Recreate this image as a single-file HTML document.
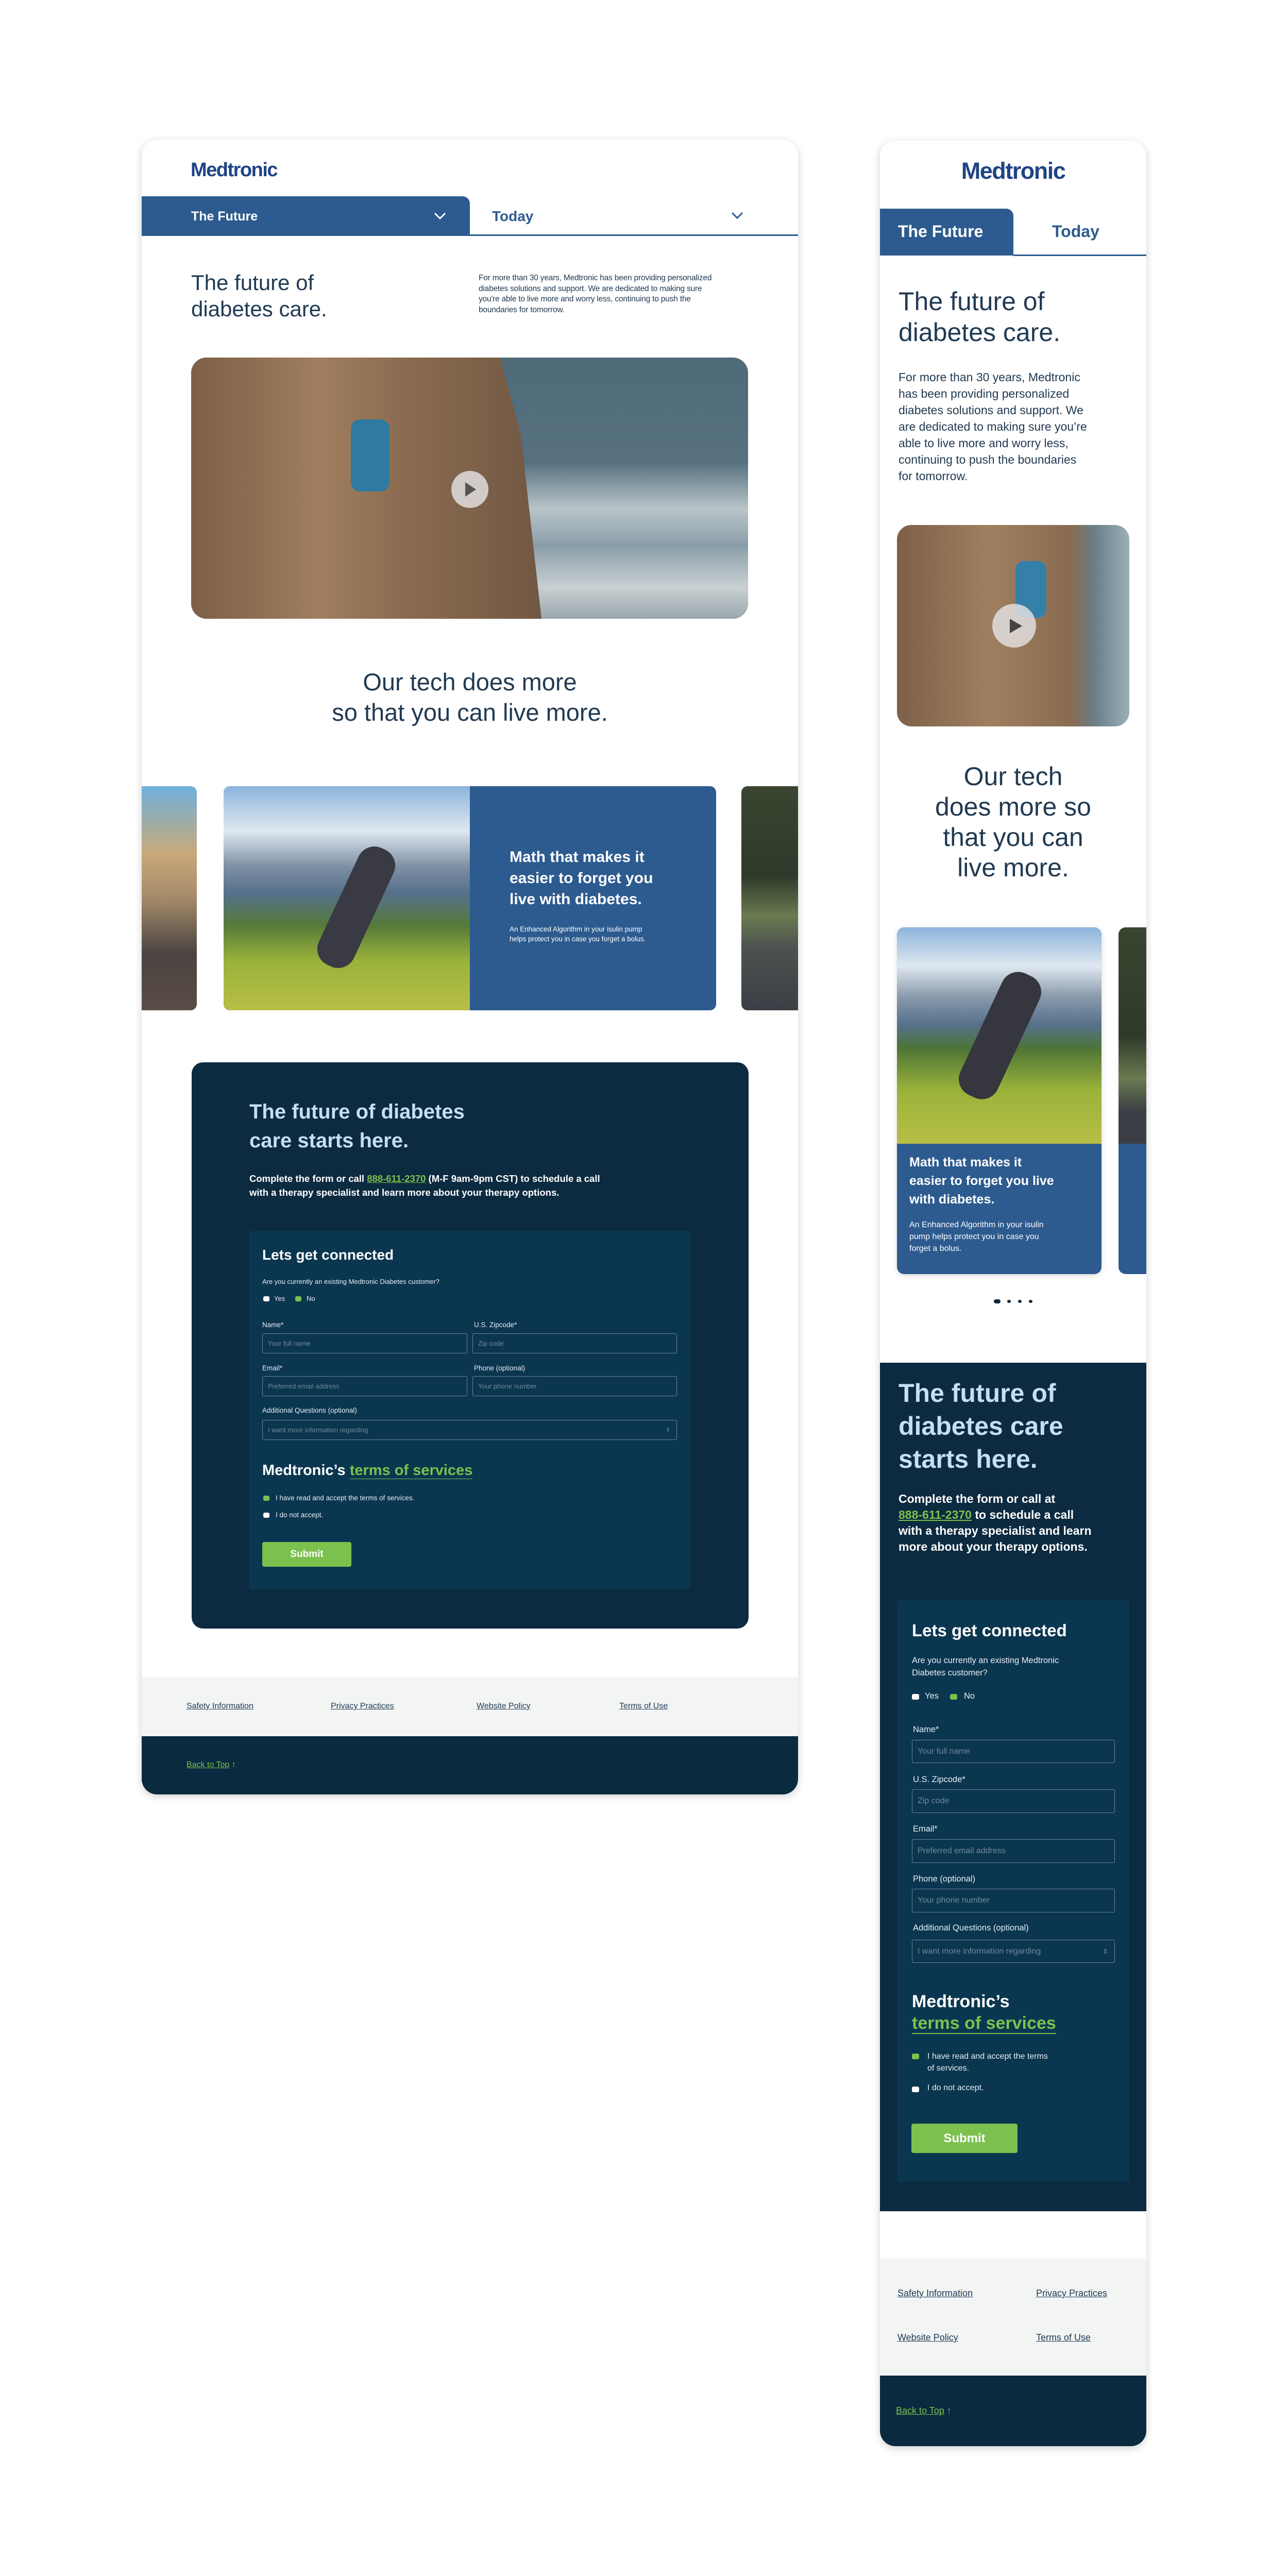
<!DOCTYPE html>
<html><head><meta charset="utf-8"><style>
*{margin:0;padding:0;box-sizing:border-box}
html,body{width:2500px;height:5021px;overflow:hidden}
body{background:#fff;position:relative;font-family:"Liberation Sans",sans-serif}
.a{position:absolute;white-space:nowrap}
.frame{position:absolute;background:#fff;border-radius:30px;box-shadow:0 4px 16px rgba(0,0,0,.18);overflow:hidden}
.logo{color:#1f4485;font-weight:bold;letter-spacing:-1.5px}
.navy{color:#213a52}
.inp{position:absolute;border:1.5px solid #6f8396;border-radius:3px;color:#6f8899;padding-left:10px;display:flex;align-items:center;white-space:nowrap}
.lbl{position:absolute;color:#e6eef4;white-space:nowrap}
.cb{position:absolute;background:#fff;border-radius:3px}
.cbg{position:absolute;background:#7cc04e;border-radius:3px}
.u{text-decoration:underline}
</style></head><body>

<!-- DESKTOP FRAME -->
<div class="frame" style="left:275px;top:271px;width:1274px;height:3212px"></div>
<div class="a logo" style="left:370px;top:309px;font-size:38px">Medtronic</div>
<div class="a" style="left:275px;top:381px;width:637px;height:77px;background:#2d5b8f;border-top-right-radius:14px"></div>
<div class="a" style="left:371px;top:406px;font-size:25px;font-weight:bold;color:#fff">The Future</div>
<svg class="a" style="left:842px;top:412px" width="24" height="16" viewBox="0 0 24 16"><path d="M2 2 L12 12 L22 2" fill="none" stroke="#fff" stroke-width="3"/></svg>
<div class="a" style="left:955px;top:404px;font-size:28px;font-weight:bold;color:#2d5b8f">Today</div>
<svg class="a" style="left:1419px;top:411px" width="24" height="16" viewBox="0 0 24 16"><path d="M2 2 L12 12 L22 2" fill="none" stroke="#2d5b8f" stroke-width="3"/></svg>
<div class="a" style="left:912px;top:455px;width:637px;height:3px;background:#2d5b8f"></div>

<div class="a navy" style="left:371px;top:523px;font-size:42px;line-height:51px">The future of<br>diabetes care.</div>
<div class="a navy" style="left:929px;top:530px;font-size:15.5px;line-height:20.5px;letter-spacing:-.2px">For more than 30 years, Medtronic has been providing personalized<br>diabetes solutions and support. We are dedicated to making sure<br>you're able to live more and worry less, continuing to push the<br>boundaries for tomorrow.</div>

<div class="a" style="left:371px;top:694px;width:1081px;height:507px;border-radius:30px;overflow:hidden;background:#587080">
 <div class="a" style="left:600px;top:0;width:481px;height:507px;background:linear-gradient(180deg,#4f6b7a 0%,#56707e 40%,#b8c4c8 58%,#8a9ea8 72%,#c9d0d2 88%,#9aa7ad 100%)"></div>
 <div class="a" style="left:0;top:0;width:700px;height:507px;background:linear-gradient(90deg,#7d5f47,#a07e5f 35%,#8a6b50 60%,#6f5642 100%);clip-path:polygon(0 0,600px 0,640px 150px,680px 507px,0 507px)"></div>
 <div class="a" style="left:310px;top:120px;width:75px;height:140px;background:#2f7aa0;border-radius:18px"></div>
 <div class="a" style="left:505px;top:220px;width:72px;height:72px;border-radius:50%;background:rgba(225,222,222,.85)"></div>
 <svg class="a" style="left:530px;top:240px" width="26" height="32" viewBox="0 0 26 32"><path d="M2 2 L23 16 L2 30 Z" fill="#555"/></svg>
</div>

<div class="a navy" style="left:275px;top:1294px;width:1274px;text-align:center;font-size:47px;line-height:59px">Our tech does more<br>so that you can live more.</div>

<!-- cards desktop -->
<div class="a" style="left:275px;top:1526px;width:107px;height:435px;border-radius:0 12px 12px 0;background:linear-gradient(180deg,#6fb0dc 0%,#c9a97a 30%,#a48a6a 50%,#4a4440 75%,#5a4c48 100%)"></div>
<div class="a" style="left:434px;top:1526px;width:956px;height:435px;border-radius:12px;overflow:hidden;background:#2d5b8f">
 <div class="a" style="left:0;top:0;width:478px;height:435px;background:linear-gradient(180deg,#8cb4dc 0%,#dfe8f0 20%,#7d8fa4 36%,#55708a 48%,#557a3a 62%,#9ab23a 78%,#b7bf46 100%)"></div>
 <div class="a" style="left:220px;top:110px;width:75px;height:250px;background:#3a3a44;border-radius:34px;transform:rotate(25deg)"></div>
 <div class="a" style="left:555px;top:117px;font-size:30px;line-height:41px;font-weight:bold;color:#fff">Math that makes it<br>easier to forget you<br>live with diabetes.</div>
 <div class="a" style="left:555px;top:268px;font-size:13.5px;line-height:19px;color:#fff">An Enhanced Algorithm in your isulin pump<br>helps protect you in case you forget a bolus.</div>
</div>
<div class="a" style="left:1439px;top:1526px;width:110px;height:435px;border-radius:12px 0 0 12px;background:linear-gradient(180deg,#3a4530 0%,#2e3a2a 40%,#6a7a50 58%,#4d5250 72%,#3b3f45 100%)"></div>

<!-- desktop dark box -->
<div class="a" style="left:372px;top:2062px;width:1081px;height:1099px;background:#0c2a40;border-radius:22px"></div>
<div class="a" style="left:484px;top:2130px;font-size:40px;line-height:56px;font-weight:bold;color:#c6def1">The future of diabetes<br>care starts here.</div>
<div class="a" style="left:484px;top:2274px;font-size:18.5px;line-height:27px;font-weight:bold;color:#fff">Complete the form or call <span class="u" style="color:#7cc04e">888-611-2370</span> (M-F 9am-9pm CST) to schedule a call<br>with a therapy specialist and learn more about your therapy options.</div>
<div class="a" style="left:484px;top:2389px;width:856px;height:696px;background:#0b3650;border-radius:6px"></div>
<div class="a" style="left:509px;top:2420px;font-size:28px;font-weight:bold;color:#fff">Lets get connected</div>
<div class="lbl" style="left:509px;top:2480px;font-size:13px">Are you currently an existing Medtronic Diabetes customer?</div>
<div class="cb" style="left:511px;top:2516px;width:12px;height:10px"></div>
<div class="lbl" style="left:532px;top:2513px;font-size:13px">Yes</div>
<div class="cbg" style="left:573px;top:2516px;width:12px;height:10px"></div>
<div class="lbl" style="left:595px;top:2513px;font-size:13px">No</div>
<div class="lbl" style="left:509px;top:2564px;font-size:13.5px">Name*</div>
<div class="lbl" style="left:920px;top:2564px;font-size:13.5px">U.S. Zipcode*</div>
<div class="inp" style="left:509px;top:2588px;width:398px;height:39px;font-size:13px">Your full name</div>
<div class="inp" style="left:917px;top:2588px;width:397px;height:39px;font-size:13px">Zip code</div>
<div class="lbl" style="left:509px;top:2648px;font-size:13.5px">Email*</div>
<div class="lbl" style="left:920px;top:2648px;font-size:13.5px">Phone (optional)</div>
<div class="inp" style="left:509px;top:2671px;width:398px;height:39px;font-size:13px">Preferred email address</div>
<div class="inp" style="left:917px;top:2671px;width:397px;height:39px;font-size:13px">Your phone number</div>
<div class="lbl" style="left:509px;top:2730px;font-size:13.5px">Additional Questions (optional)</div>
<div class="inp" style="left:509px;top:2756px;width:805px;height:39px;font-size:13px">I want more information regarding<span style="position:absolute;right:12px;font-size:11px">⇕</span></div>
<div class="a" style="left:509px;top:2838px;font-size:29px;font-weight:bold;color:#fff">Medtronic’s <span style="color:#7cc04e;border-bottom:1.5px solid #7cc04e">terms of services</span></div>
<div class="cbg" style="left:511px;top:2903px;width:12px;height:10px"></div>
<div class="lbl" style="left:535px;top:2900px;font-size:13.5px">I have read and accept the terms of services.</div>
<div class="cb" style="left:511px;top:2936px;width:12px;height:10px"></div>
<div class="lbl" style="left:535px;top:2933px;font-size:13.5px">I do not accept.</div>
<div class="a" style="left:509px;top:2993px;width:173px;height:48px;background:#7cc04e;border-radius:4px;color:#fff;font-weight:bold;font-size:19px;text-align:center;line-height:48px">Submit</div>

<!-- desktop footer -->
<div class="a" style="left:275px;top:3255px;width:1274px;height:115px;background:#f3f5f5"></div>
<div class="a" style="left:275px;top:3370px;width:1274px;height:113px;background:#0a2a40;border-radius:0 0 30px 30px"></div>
<div class="a u navy" style="left:362px;top:3303px;font-size:16px">Safety Information</div>
<div class="a u navy" style="left:642px;top:3303px;font-size:16px">Privacy Practices</div>
<div class="a u navy" style="left:925px;top:3303px;font-size:16px">Website Policy</div>
<div class="a u navy" style="left:1202px;top:3303px;font-size:16px">Terms of Use</div>
<div class="a" style="left:362px;top:3417px;font-size:16px;color:#7cc04e"><span class="u">Back to Top</span> ↑</div>

<!-- MOBILE FRAME -->
<div class="frame" style="left:1708px;top:273px;width:517px;height:4475px"></div>
<div class="a logo" style="left:1708px;top:306px;width:517px;text-align:center;font-size:45px">Medtronic</div>
<div class="a" style="left:1708px;top:405px;width:259px;height:91px;background:#2d5b8f;border-top-right-radius:14px"></div>
<div class="a" style="left:1743px;top:431px;font-size:32px;font-weight:bold;color:#fff">The Future</div>
<div class="a" style="left:2042px;top:431px;font-size:32px;font-weight:bold;color:#2d5b8f">Today</div>
<div class="a" style="left:1967px;top:494px;width:258px;height:3px;background:#2d5b8f"></div>
<div class="a navy" style="left:1744px;top:555px;font-size:50px;line-height:60px">The future of<br>diabetes care.</div>
<div class="a navy" style="left:1744px;top:716px;font-size:23px;line-height:32px">For more than 30 years, Medtronic<br>has been providing personalized<br>diabetes solutions and support. We<br>are dedicated to making sure you’re<br>able to live more and worry less,<br>continuing to push the boundaries<br>for tomorrow.</div>
<div class="a" style="left:1741px;top:1019px;width:451px;height:391px;border-radius:28px;overflow:hidden;background:linear-gradient(90deg,#7d6048 0%,#a07f60 40%,#8a6b50 75%,#6a7e88 85%,#9ab0b8 100%)">
 <div class="a" style="left:230px;top:70px;width:60px;height:110px;background:#3580a8;border-radius:16px"></div>
 <div class="a" style="left:185px;top:153px;width:85px;height:85px;border-radius:50%;background:rgba(225,222,222,.85)"></div>
 <svg class="a" style="left:217px;top:180px" width="30" height="32" viewBox="0 0 30 32"><path d="M2 2 L26 16 L2 30 Z" fill="#444"/></svg>
</div>
<div class="a navy" style="left:1708px;top:1478px;width:517px;text-align:center;font-size:50px;line-height:59px">Our tech<br>does more so<br>that you can<br>live more.</div>

<div class="a" style="left:1741px;top:1800px;width:397px;height:673px;border-radius:14px;overflow:hidden;background:#2d5b8f;box-shadow:0 3px 10px rgba(0,0,0,.15)">
 <div class="a" style="left:0;top:0;width:397px;height:420px;background:linear-gradient(180deg,#8cb4dc 0%,#dfe8f0 18%,#8a9aac 32%,#56708a 45%,#4d7436 56%,#9ab23a 75%,#b7bf46 100%)"></div>
 <div class="a" style="left:160px;top:80px;width:80px;height:260px;background:#36363f;border-radius:34px;transform:rotate(25deg)"></div>
 <div class="a" style="left:24px;top:438px;font-size:25px;line-height:36px;font-weight:bold;color:#fff">Math that makes it<br>easier to forget you live<br>with diabetes.</div>
 <div class="a" style="left:24px;top:566px;font-size:16px;line-height:23px;color:#fff">An Enhanced Algorithm in your isulin<br>pump helps protect you in case you<br>forget a bolus.</div>
</div>
<div class="a" style="left:2171px;top:1800px;width:54px;height:673px;border-radius:14px 0 0 14px;overflow:hidden;background:#2d5b8f">
 <div class="a" style="left:0;top:0;width:54px;height:420px;background:linear-gradient(180deg,#3a4530 0%,#2e3a2a 50%,#6a7a50 70%,#3b3f45 85%,#3b3f45 100%)"></div>
</div>
<div class="a" style="left:1929px;top:2522px;width:13px;height:8px;border-radius:4px;background:#0c2a40"></div>
<div class="a" style="left:1955px;top:2523px;width:7px;height:6px;border-radius:3px;background:#0c2a40"></div>
<div class="a" style="left:1976px;top:2523px;width:7px;height:6px;border-radius:3px;background:#0c2a40"></div>
<div class="a" style="left:1997px;top:2523px;width:7px;height:6px;border-radius:3px;background:#0c2a40"></div>

<div class="a" style="left:1708px;top:2645px;width:517px;height:1647px;background:#0c2a40"></div>
<div class="a" style="left:1744px;top:2672px;font-size:50px;line-height:64px;font-weight:bold;color:#c6def1">The future of<br>diabetes care<br>starts here.</div>
<div class="a" style="left:1744px;top:2894px;font-size:23px;line-height:31px;font-weight:bold;color:#fff">Complete the form or call at<br><span class="u" style="color:#7cc04e">888-611-2370</span> to schedule a call<br>with a therapy specialist and learn<br>more about your therapy options.</div>
<div class="a" style="left:1741px;top:3106px;width:451px;height:1129px;background:#0b3650;border-radius:6px"></div>
<div class="a" style="left:1770px;top:3146px;font-size:33px;font-weight:bold;color:#fff">Lets get connected</div>
<div class="lbl" style="left:1770px;top:3211px;font-size:16.5px;line-height:24px">Are you currently an existing Medtronic<br>Diabetes customer?</div>
<div class="cb" style="left:1770px;top:3288px;width:14px;height:11px"></div>
<div class="lbl" style="left:1795px;top:3283px;font-size:16.5px">Yes</div>
<div class="cbg" style="left:1844px;top:3288px;width:14px;height:11px"></div>
<div class="lbl" style="left:1871px;top:3283px;font-size:16.5px">No</div>
<div class="lbl" style="left:1772px;top:3348px;font-size:16.5px">Name*</div>
<div class="inp" style="left:1770px;top:3377px;width:394px;height:45px;font-size:16px">Your full name</div>
<div class="lbl" style="left:1772px;top:3445px;font-size:16.5px">U.S. Zipcode*</div>
<div class="inp" style="left:1770px;top:3473px;width:394px;height:46px;font-size:16px">Zip code</div>
<div class="lbl" style="left:1772px;top:3541px;font-size:16.5px">Email*</div>
<div class="inp" style="left:1770px;top:3570px;width:394px;height:46px;font-size:16px">Preferred email address</div>
<div class="lbl" style="left:1772px;top:3638px;font-size:16.5px">Phone (optional)</div>
<div class="inp" style="left:1770px;top:3666px;width:394px;height:46px;font-size:16px">Your phone number</div>
<div class="lbl" style="left:1772px;top:3733px;font-size:16.5px">Additional Questions (optional)</div>
<div class="inp" style="left:1770px;top:3765px;width:394px;height:45px;font-size:16px">I want more information regarding<span style="position:absolute;right:12px;font-size:13px">⇕</span></div>
<div class="a" style="left:1770px;top:3864px;font-size:34px;line-height:42px;font-weight:bold;color:#fff">Medtronic’s<br><span style="color:#7cc04e;border-bottom:2px solid #7cc04e">terms of services</span></div>
<div class="cbg" style="left:1770px;top:3986px;width:14px;height:11px"></div>
<div class="lbl" style="left:1800px;top:3980px;font-size:16px;line-height:23px">I have read and accept the terms<br>of services.</div>
<div class="cb" style="left:1770px;top:4050px;width:14px;height:11px"></div>
<div class="lbl" style="left:1800px;top:4044px;font-size:16px">I do not accept.</div>
<div class="a" style="left:1769px;top:4122px;width:206px;height:57px;background:#7cc04e;border-radius:4px;color:#fff;font-weight:bold;font-size:24px;text-align:center;line-height:57px">Submit</div>

<div class="a" style="left:1708px;top:4383px;width:517px;height:228px;background:#f3f5f5"></div>
<div class="a" style="left:1708px;top:4611px;width:517px;height:137px;background:#0a2a40;border-radius:0 0 30px 30px"></div>
<div class="a u navy" style="left:1742px;top:4441px;font-size:18px">Safety Information</div>
<div class="a u navy" style="left:2011px;top:4441px;font-size:18px">Privacy Practices</div>
<div class="a u navy" style="left:1742px;top:4527px;font-size:18px">Website Policy</div>
<div class="a u navy" style="left:2011px;top:4527px;font-size:18px">Terms of Use</div>
<div class="a" style="left:1739px;top:4669px;font-size:18px;color:#7cc04e"><span class="u">Back to Top</span> ↑</div>
</body></html>
